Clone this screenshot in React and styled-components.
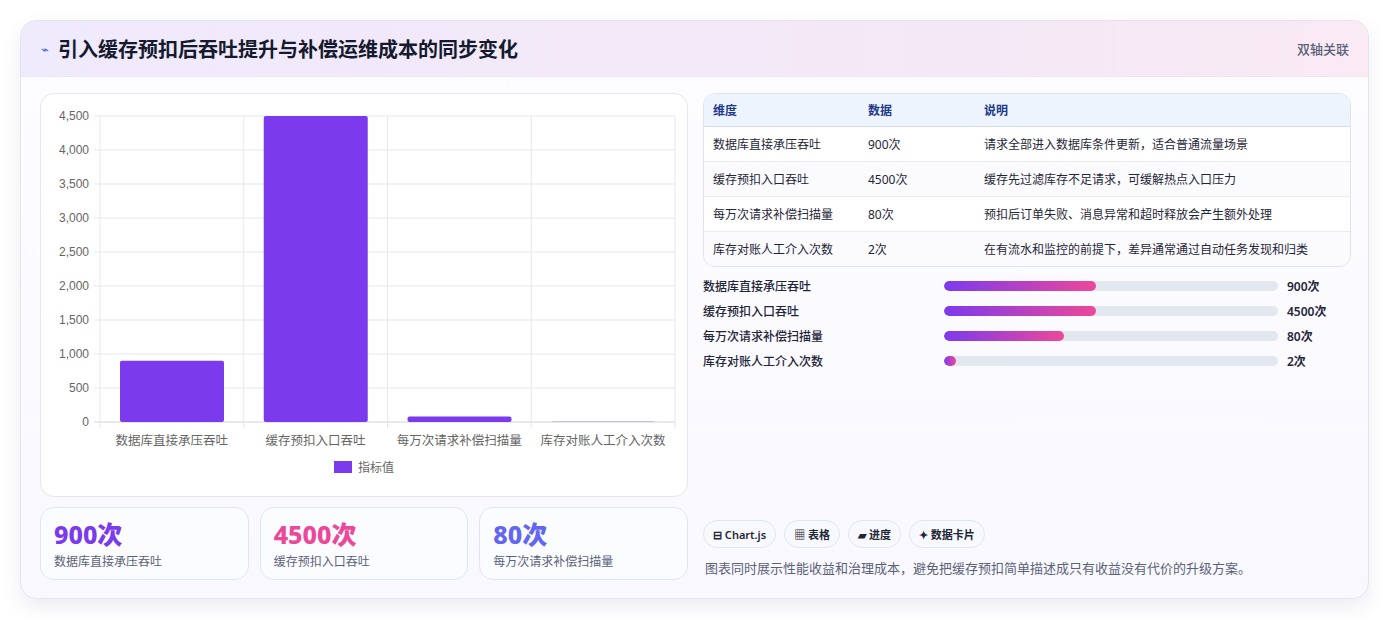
import React from "react";
import styled, { createGlobalStyle } from "styled-components";

const G = createGlobalStyle`
  body{margin:0;background:#fff;font-family:"Noto Sans","Noto Sans CJK SC",sans-serif;}
`;
const Page = styled.div`padding:20px 20px 20px 20px;background:#fff;`;
const Card = styled.div`
  width:1349px;height:579px;box-sizing:border-box;border:1px solid #e4e4f0;border-radius:16px;
  background:linear-gradient(180deg,#fdfcff,#f9f8ff);box-shadow:0 8px 20px rgba(80,80,140,.10);overflow:hidden;
  display:flex;flex-direction:column;`;
const Header = styled.div`
  height:55px;flex:none;display:flex;align-items:center;justify-content:space-between;padding:0 19px 0 20px;
  background:linear-gradient(90deg,#efeafc,#f5e8f6 70%,#f9eaf4);border-bottom:1px solid #ebe6f4;`;
const Title = styled.h1`margin:0;font-size:20px;font-weight:700;color:#151a2e;display:flex;align-items:center;gap:9px;`;
const Bolt = styled.span`color:#3b5be0;font-size:13px;font-weight:400;`;
const Tag = styled.span`font-size:13px;color:#5b6278;font-weight:500;`;
const Body = styled.div`flex:1;display:grid;grid-template-columns:648px 648px;gap:15px;padding:16px 19px 19px 19px;`;
const Left = styled.div`display:flex;flex-direction:column;gap:10px;`;
const ChartBox = styled.div`height:404px;box-sizing:border-box;background:#fff;border:1px solid #e5e7f0;border-radius:14px;position:relative;`;
const Stats = styled.div`display:grid;grid-template-columns:repeat(3,1fr);gap:11px;`;
const Stat = styled.div`height:73px;box-sizing:border-box;border:1px solid #dfe6f2;border-radius:14px;background:#fbfcff;padding:9px 13px;`;
const StatNum = styled.div`font-size:25px;font-weight:800;line-height:34px;color:${p=>p.c};`;
const StatLbl = styled.div`font-size:12px;color:#5b6278;margin-top:1px;`;
const Right = styled.div`display:flex;flex-direction:column;`;
const Table = styled.table`width:100%;border-collapse:separate;border-spacing:0;border:1px solid #dde3ef;border-radius:12px;overflow:hidden;font-size:12px;color:#1f2638;background:#fff;`;
const Th = styled.th`text-align:left;font-weight:700;color:#1e3a8a;background:#eef4fd;height:32px;padding:0 0 0 ${p=>p.pl||9}px;border-bottom:1px solid #d5dcea;width:${p=>p.w||"auto"};`;
const Td = styled.td`height:34px;padding:0 0 0 9px;border-bottom:${p=>p.last?"none":"1px solid #e8ebf2"};background:${p=>p.alt?"#fbfbfe":"#fff"};`;
const Bars = styled.div`display:flex;flex-direction:column;gap:9px;margin-top:10px;`;
const BarRow = styled.div`display:grid;grid-template-columns:232px 334px auto;column-gap:9px;align-items:center;height:16px;font-size:12px;font-weight:500;color:#1f2638;`;
const Val = styled.span`font-weight:600;`;
const Track = styled.div`height:10px;border-radius:5px;background:#e3e7ef;overflow:hidden;`;
const Fill = styled.div`height:100%;border-radius:5px;background:linear-gradient(90deg,#7c3aed,#ec4899);`;
const Spacer = styled.div`flex:1;`;
const Chips = styled.div`display:flex;gap:8px;`;
const Chip = styled.span`height:28px;box-sizing:border-box;border:1px solid #e2e6ee;border-radius:14px;background:#f8f9fc;padding:0 9px;display:flex;align-items:center;font-size:11px;font-weight:600;color:#1f2638;`;
const Note = styled.p`margin:10px 0 3px 2px;font-size:13px;color:#5b6278;`;

const cats=["数据库直接承压吞吐","缓存预扣入口吞吐","每万次请求补偿扫描量","库存对账人工介入次数"];
const vals=[900,4500,80,2];

function Chart(){
  const x0=59,x1=634,yT=22,yB=328,h=yB-yT,cw=(x1-x0)/4;
  const ticks=[0,500,1000,1500,2000,2500,3000,3500,4000,4500];
  return(
    <svg width="646" height="402" style={{display:"block"}} fontFamily="Liberation Sans, Noto Sans CJK SC, sans-serif">
      {ticks.map(t=>{const y=yB-t/4500*h;return <g key={t}>
        <line x1={x0-6} x2={x1} y1={y} y2={y} stroke={t===0?"#cfd2d9":"#e5e7eb"}/>
        <text x={x0-11} y={y+4} fontSize="12" textAnchor="end" fill="#666">{t.toLocaleString("en-US")}</text></g>})}
      {[0,1,2,3,4].map(i=><line key={i} x1={x0+i*cw} x2={x0+i*cw} y1={yT} y2={yB+6} stroke="#e5e7eb"/>)}
      {vals.map((v,i)=>{const bh=v/4500*h;return <rect key={i} x={x0+i*cw+20} y={yB-bh} width={104} height={bh} rx="2" fill="#7c3aed"/>})}
      {cats.map((c,i)=><text key={c} x={x0+i*cw+cw/2} y={351} fontSize="12.5" textAnchor="middle" fill="#666">{c}</text>)}
      <rect x={293} y={367} width={18} height={12} fill="#7c3aed"/>
      <text x={317} y={378} fontSize="12" fill="#666">指标值</text>
    </svg>
  );
}

const rows=[["数据库直接承压吞吐","900次","请求全部进入数据库条件更新，适合普通流量场景"],
["缓存预扣入口吞吐","4500次","缓存先过滤库存不足请求，可缓解热点入口压力"],
["每万次请求补偿扫描量","80次","预扣后订单失败、消息异常和超时释放会产生额外处理"],
["库存对账人工介入次数","2次","在有流水和监控的前提下，差异通常通过自动任务发现和归类"]];
const pct=[45.5,45.5,36,3.6];

export default function App(){
  return(<Page><G/><Card>
    <Header><Title><Bolt>⌁</Bolt>引入缓存预扣后吞吐提升与补偿运维成本的同步变化</Title><Tag>双轴关联</Tag></Header>
    <Body>
      <Left>
        <ChartBox><Chart/></ChartBox>
        <Stats>
          <Stat><StatNum c="#7c3aed">900次</StatNum><StatLbl>数据库直接承压吞吐</StatLbl></Stat>
          <Stat><StatNum c="#ec4899">4500次</StatNum><StatLbl>缓存预扣入口吞吐</StatLbl></Stat>
          <Stat><StatNum c="#6366f1">80次</StatNum><StatLbl>每万次请求补偿扫描量</StatLbl></Stat>
        </Stats>
      </Left>
      <Right>
        <Table><thead><tr><Th w="146px">维度</Th><Th w="107px">数据</Th><Th>说明</Th></tr></thead>
          <tbody>{rows.map((r,i)=><tr key={i}>{r.map((c,j)=><Td key={j} alt={i%2===1} last={i===3}>{c}</Td>)}</tr>)}</tbody></Table>
        <Bars>{rows.map((r,i)=><BarRow key={i}><span>{r[0]}</span><Track><Fill style={{width:pct[i]+"%"}}/></Track><Val>{r[1]}</Val></BarRow>)}</Bars>
        <Spacer/>
        <Chips><Chip>⊟ Chart.js</Chip><Chip>▦ 表格</Chip><Chip>▰ 进度</Chip><Chip>✦ 数据卡片</Chip></Chips>
        <Note>图表同时展示性能收益和治理成本，避免把缓存预扣简单描述成只有收益没有代价的升级方案。</Note>
      </Right>
    </Body>
  </Card></Page>);
}
